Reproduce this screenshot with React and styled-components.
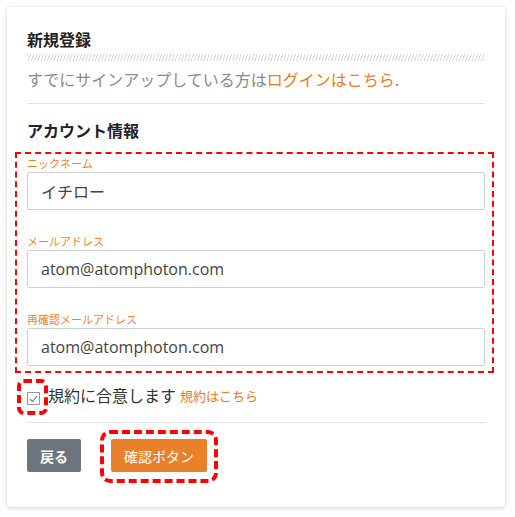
import React from 'react';
import styled, { createGlobalStyle } from 'styled-components';

const GlobalStyle = createGlobalStyle`
    body {
        margin: 0;
        padding: 7px;
        background: #fff;
        font-family: "Open Sans", "Noto Sans CJK JP", sans-serif;
    }
`;

const Card = styled.div`
    width: 498px;
    box-sizing: border-box;
    padding: 20px 20px 35px;
    background: #fff;
    border-radius: 2px;
    box-shadow: 0 1px 4px rgba(0, 0, 0, 0.18);
`;

const Title = styled.h2`
    margin: 0;
    font-size: 16px;
    line-height: 24px;
    font-weight: 700;
    color: #222;
    font-family: "Noto Sans CJK JP", sans-serif;
`;

const Stripe = styled.div`
    margin-top: 3px;
    height: 7px;
    background: repeating-linear-gradient(110deg, #dcdcdc 0 1px, #fff 1px 3px);
`;

const Lead = styled.p`
    margin: 6px 0 0;
    font-size: 16px;
    line-height: 24px;
    color: #8a8a8a;
    font-family: "Noto Sans CJK JP", sans-serif;
`;

const Link = styled.a`
    color: #e67e22;
    text-decoration: none;
    font-size: ${(p) => p.size || 'inherit'};
    margin-left: ${(p) => p.gap || '0'};
`;

const Divider = styled.hr`
    margin: ${(p) => p.top}px 0 0;
    border: 0;
    border-top: 1px solid #e3e3e3;
`;

const Section = styled.h3`
    margin: 14px 0 0;
    font-size: 16px;
    line-height: 24px;
    font-weight: 700;
    color: #222;
    font-family: "Noto Sans CJK JP", sans-serif;
`;

const FieldGroup = styled.div`
    margin: 10px -9px 0 -12px;
    padding: 0 7px 5px 10px;
    border: 2px dashed #f00;
    display: flex;
    flex-direction: column;
    gap: 22px;
`;

const Field = styled.div`
    display: flex;
    flex-direction: column;
`;

const Label = styled.label`
    height: 18px;
    font-size: 11px;
    line-height: 18px;
    color: #ea8530;
    font-family: "Noto Sans CJK JP", sans-serif;
`;

const Input = styled.input`
    box-sizing: border-box;
    height: 38px;
    width: 100%;
    padding: 0 13px;
    border: 1px solid #ccd2da;
    border-radius: 2px;
    font-family: "Open Sans", "Noto Sans CJK JP", sans-serif;
    font-size: 16px;
    color: #444;
    background: #fff;
    outline: none;
`;

const AgreeRow = styled.div`
    margin-top: 10px;
    display: flex;
    align-items: center;
    height: 24px;
    font-family: "Noto Sans CJK JP", sans-serif;
    font-size: 16px;
    color: #333;
`;

const CheckWrap = styled.span`
    position: relative;
    display: inline-flex;
    margin: 7px 8px 0 0;

    &::after {
        content: '';
        position: absolute;
        left: -10px;
        right: -8px;
        top: -13px;
        bottom: -10px;
        border: 4px dashed #f00;
        border-radius: 7px;
    }
`;

const Check = styled.span`
    width: 13px;
    height: 13px;
    box-sizing: border-box;
    border: 1px solid #9a9a9a;
    background: #fff;
    display: inline-flex;
    align-items: center;
    justify-content: center;
`;

const Buttons = styled.div`
    margin-top: 16px;
    display: flex;
    gap: 30px;
`;

const Button = styled.button`
    position: relative;
    height: 33px;
    padding: 0 13px;
    border: 0;
    border-radius: 2px;
    background: ${(p) => (p.primary ? '#e8812a' : '#6c757d')};
    color: #fff;
    font-family: "Noto Sans CJK JP", sans-serif;
    font-size: 14px;
    font-weight: ${(p) => (p.primary ? 400 : 700)};

    ${(p) => p.marked && `
        &::after {
            content: '';
            position: absolute;
            left: -11px;
            right: -11px;
            top: -9px;
            bottom: -11px;
            border: 4px dashed #f00;
            border-radius: 10px;
        }
    `}
`;

const App = () => {
    return (
        <>
            <GlobalStyle />
            <Card>
                <Title>新規登録</Title>
                <Stripe />
                <Lead>
                    すでにサインアップしている方は<Link href="#">ログインはこちら</Link>.
                </Lead>
                <Divider top={12} />
                <Section>アカウント情報</Section>
                <FieldGroup>
                    <Field>
                        <Label>ニックネーム</Label>
                        <Input defaultValue="イチロー" />
                    </Field>
                    <Field>
                        <Label>メールアドレス</Label>
                        <Input defaultValue="atom@atomphoton.com" />
                    </Field>
                    <Field>
                        <Label>再確認メールアドレス</Label>
                        <Input defaultValue="atom@atomphoton.com" />
                    </Field>
                </FieldGroup>
                <AgreeRow>
                    <CheckWrap>
                        <Check>
                            <svg width="9" height="8" viewBox="0 0 9 8">
                                <path d="M1 4.2 L3.4 6.5 L8 1.2" fill="none" stroke="#777" strokeWidth="1.1" />
                            </svg>
                        </Check>
                    </CheckWrap>
                    規約に合意します
                    <Link href="#" size="13px" gap="4px">規約はこちら</Link>
                </AgreeRow>
                <Divider top={15} />
                <Buttons>
                    <Button>戻る</Button>
                    <Button primary marked>確認ボタン</Button>
                </Buttons>
            </Card>
        </>
    );
};

export default App;
